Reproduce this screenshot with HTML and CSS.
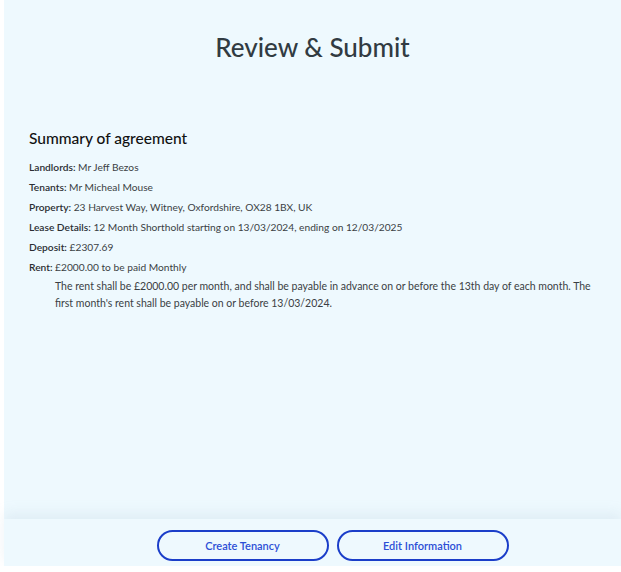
FILE: index.html
```html
<!DOCTYPE html>
<html>
<head>
<meta charset="utf-8">
<link rel="stylesheet" href="styles.css">
</head>
<body>
<div class="page">
  <main class="content">
    <h1 class="title">Review &amp; Submit</h1>
    <section class="summary">
      <h2 class="summary-title">Summary of agreement</h2>
      <p class="row"><b>Landlords:</b> Mr Jeff Bezos</p>
      <p class="row"><b>Tenants:</b> Mr Micheal Mouse</p>
      <p class="row"><b>Property:</b> 23 Harvest Way, Witney, Oxfordshire, OX28 1BX, UK</p>
      <p class="row"><b>Lease Details:</b> 12 Month Shorthold starting on 13/03/2024, ending on 12/03/2025</p>
      <p class="row"><b>Deposit:</b> £2307.69</p>
      <p class="row"><b>Rent:</b> £2000.00 to be paid Monthly</p>
      <p class="note">The rent shall be £2000.00 per month, and shall be payable in advance on or before the 13th day of each month. The first month's rent shall be payable on or before 13/03/2024.</p>
    </section>
  </main>
  <footer class="footer">
    <button class="btn">Create Tenancy</button>
    <button class="btn">Edit Information</button>
  </footer>
</div>
</body>
</html>
```
FILE: styles.css
```css
html, body {
  margin: 0;
  padding: 0;
  background: #ffffff;
}
body {
  font-family: "Lato", "Noto Sans", sans-serif;
}
.page {
  margin-left: 4px;
  height: 566px;
  background: #eef9fe;
  display: flex;
  flex-direction: column;
}
.content {
  flex: 1;
  padding: 0 25px;
}
.title {
  margin: 30px 0 0;
  text-align: center;
  font-size: 26px;
  font-weight: 500;
  color: #313b42;
  line-height: 34px;
}
.summary {
  margin-top: 64px;
}
.summary-title {
  margin: 0 0 9px;
  font-size: 15.5px;
  font-weight: 500;
  color: #111111;
  line-height: 20px;
}
.row {
  margin: 0;
  font-size: 10.2px;
  line-height: 20px;
  color: #3b3f44;
}
.row b {
  font-weight: 600;
  color: #2a2e33;
}
.note {
  margin: 1px 0 0 26px;
  font-size: 10.5px;
  line-height: 17px;
  color: #3b3f44;
}
.footer {
  height: 47px;
  box-sizing: border-box;
  padding: 5px 0 0 40px;
  display: flex;
  justify-content: center;
  align-items: center;
  gap: 8px;
  box-shadow: 0 -6px 12px rgba(160, 190, 205, 0.18);
}
.btn {
  width: 172px;
  height: 31px;
  border: 2px solid #1b3ec9;
  border-radius: 16px;
  background: transparent;
  color: #2c4fd6;
  font-family: "Lato", "Noto Sans", sans-serif;
  font-size: 11px;
  font-weight: 600;
}
```
